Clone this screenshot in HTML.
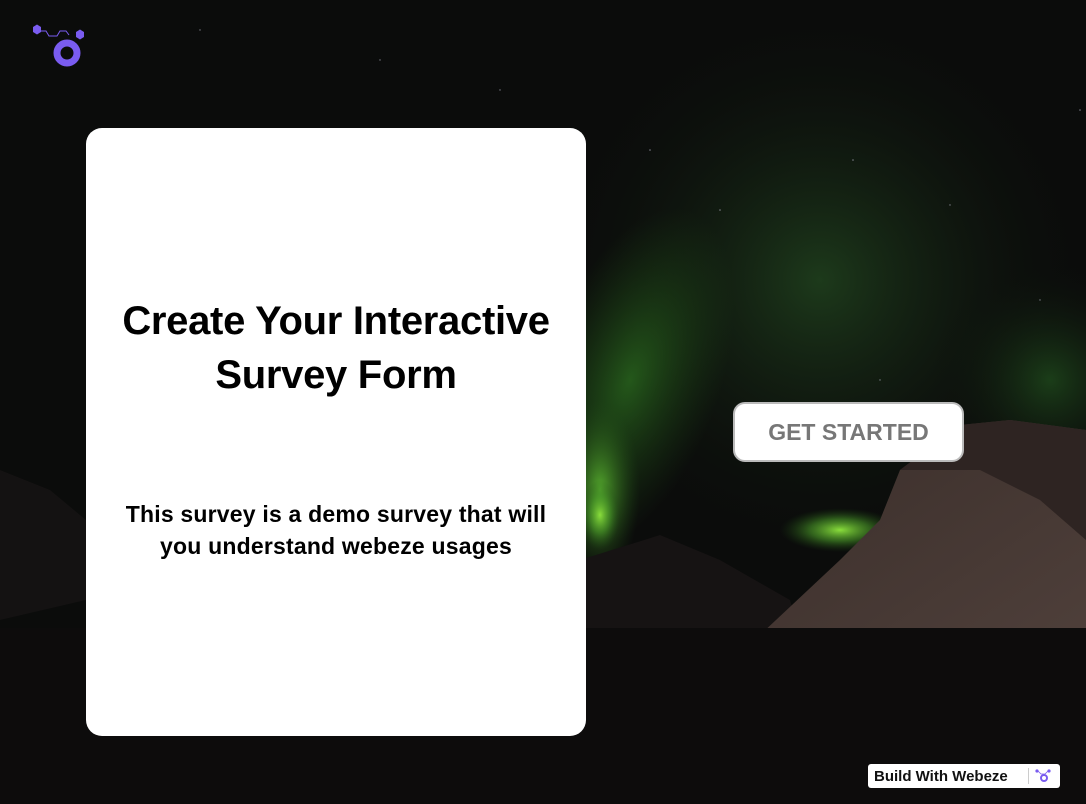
<!DOCTYPE html>
<html><head><meta charset="utf-8"><style>
html,body{margin:0;padding:0;width:1086px;height:804px;overflow:hidden;background:#0c0c0c;font-family:"Liberation Sans",sans-serif}
.bg{position:absolute;left:0;top:0}
.card{position:absolute;left:86px;top:128px;width:500px;height:608px;background:#fff;border-radius:16px;text-align:center}
.card h1{position:absolute;top:166px;left:0;width:100%;margin:0;font-size:40px;line-height:54px;font-weight:bold;color:#000;letter-spacing:-0.3px}
.card p{position:absolute;top:370px;left:0;width:100%;margin:0;font-size:23px;line-height:32px;font-weight:bold;color:#000;letter-spacing:.2px}
.btn{position:absolute;left:733px;top:402px;width:231px;height:60px;background:#fff;border:2px solid #bbb;border-radius:12px;box-sizing:border-box;text-align:center;line-height:56px;font-weight:bold;font-size:23px;color:#777}
.badge{position:absolute;left:868px;top:764px;width:192px;height:24px;background:#fff;border-radius:3px;font-weight:bold;font-size:15px;line-height:25px;color:#111}
</style></head><body>
<svg class="bg" width="1086" height="804" viewBox="0 0 1086 804">
<defs>
<radialGradient id="s1" cx="820" cy="280" r="280" gradientUnits="userSpaceOnUse"><stop offset="0" stop-color="#1d3a1b"/><stop offset="1" stop-color="#0b0c0b" stop-opacity="0"/></radialGradient>
<radialGradient id="s2" cx="1050" cy="380" r="120" gradientUnits="userSpaceOnUse"><stop offset="0" stop-color="#1f4a1c" stop-opacity=".8"/><stop offset="1" stop-color="#0b0c0b" stop-opacity="0"/></radialGradient>
<radialGradient id="a1" cx="0.5" cy="0.5" r="0.5"><stop offset="0" stop-color="#5cb830" stop-opacity=".9"/><stop offset="1" stop-color="#1e4a16" stop-opacity="0"/></radialGradient>
<radialGradient id="a2" cx="0.5" cy="0.5" r="0.5"><stop offset="0" stop-color="#8ade3c"/><stop offset=".5" stop-color="#4a9a28" stop-opacity=".6"/><stop offset="1" stop-color="#1e4a16" stop-opacity="0"/></radialGradient>
<radialGradient id="a3" cx="0.5" cy="0.5" r="0.5"><stop offset="0" stop-color="#2a6a1e" stop-opacity=".8"/><stop offset="1" stop-color="#1e4a16" stop-opacity="0"/></radialGradient>
<linearGradient id="m" x1="0" y1="0" x2="1" y2="1"><stop offset="0" stop-color="#3a2e2a"/><stop offset="1" stop-color="#4e3f3a"/></linearGradient>
</defs>
<rect width="1086" height="804" fill="#0b0c0b"/>
<rect width="1086" height="804" fill="url(#s1)"/>
<rect width="1086" height="804" fill="url(#s2)"/>
<ellipse cx="630" cy="380" rx="90" ry="180" fill="url(#a3)" transform="rotate(20 630 380)"/>
<ellipse cx="600" cy="490" rx="40" ry="90" fill="url(#a1)"/>
<ellipse cx="600" cy="515" rx="20" ry="35" fill="url(#a2)"/>
<ellipse cx="840" cy="530" rx="60" ry="22" fill="url(#a2)"/>
<polygon points="0,470 50,490 86,520 86,600 0,620" fill="#141212"/>
<polygon points="580,560 660,535 720,560 790,600 800,635 580,635" fill="#161313"/>
<polygon points="760,635 840,560 880,520 900,470 960,425 1010,420 1086,430 1086,640" fill="url(#m)"/>
<polygon points="900,470 960,425 1010,420 1086,430 1086,540 1040,500 980,470" fill="#2e2422"/>
<rect x="0" y="628" width="1086" height="176" fill="#0d0c0c"/>
<g fill="#aab" opacity=".7"><circle cx="650" cy="150" r=".8"/><circle cx="853" cy="160" r=".8"/><circle cx="720" cy="210" r=".8"/><circle cx="1080" cy="110" r=".8"/><circle cx="200" cy="30" r=".7"/><circle cx="950" cy="205" r=".7"/><circle cx="1040" cy="300" r=".7"/><circle cx="880" cy="380" r=".7"/><circle cx="380" cy="60" r=".7"/><circle cx="500" cy="90" r=".7"/></g>
</svg>
<svg style="position:absolute;left:30px;top:22px" width="60" height="50" viewBox="30 22 60 50">
<polygon points="33,27 37,24.5 41,27 41,32 37,34.5 33,32" fill="#7a5cf0"/>
<polygon points="76,32 80,29.5 84,32 84,37 80,39.5 76,37" fill="#7a5cf0"/>
<path d="M41,31 L46,31 L49,36 L57,36 L60,31 L66,31 L69,35" fill="none" stroke="#7a5cf0" stroke-width="1"/>
<circle cx="67" cy="53" r="10" fill="none" stroke="#7a5cf0" stroke-width="7"/>
</svg>
<div class="card"><h1>Create Your Interactive<br>Survey Form</h1><p>This survey is a demo survey that will<br>you understand webeze usages</p></div>
<div class="btn">GET STARTED</div>
<div class="badge"><span style="position:absolute;left:6px">Build With Webeze</span><span style="position:absolute;left:160px;top:4px;height:16px;border-left:1px solid #ccc"></span>
<svg style="position:absolute;left:167px;top:4px" width="16" height="16" viewBox="0 0 16 16"><circle cx="2" cy="3" r="1.6" fill="#7a5cf0"/><circle cx="14" cy="3" r="1.6" fill="#7a5cf0"/><path d="M3,3 L6,6 L10,6 L13,3" stroke="#7a5cf0" fill="none" stroke-width=".8"/><circle cx="9" cy="10" r="3" fill="none" stroke="#7a5cf0" stroke-width="2"/></svg></div>
</body></html>
